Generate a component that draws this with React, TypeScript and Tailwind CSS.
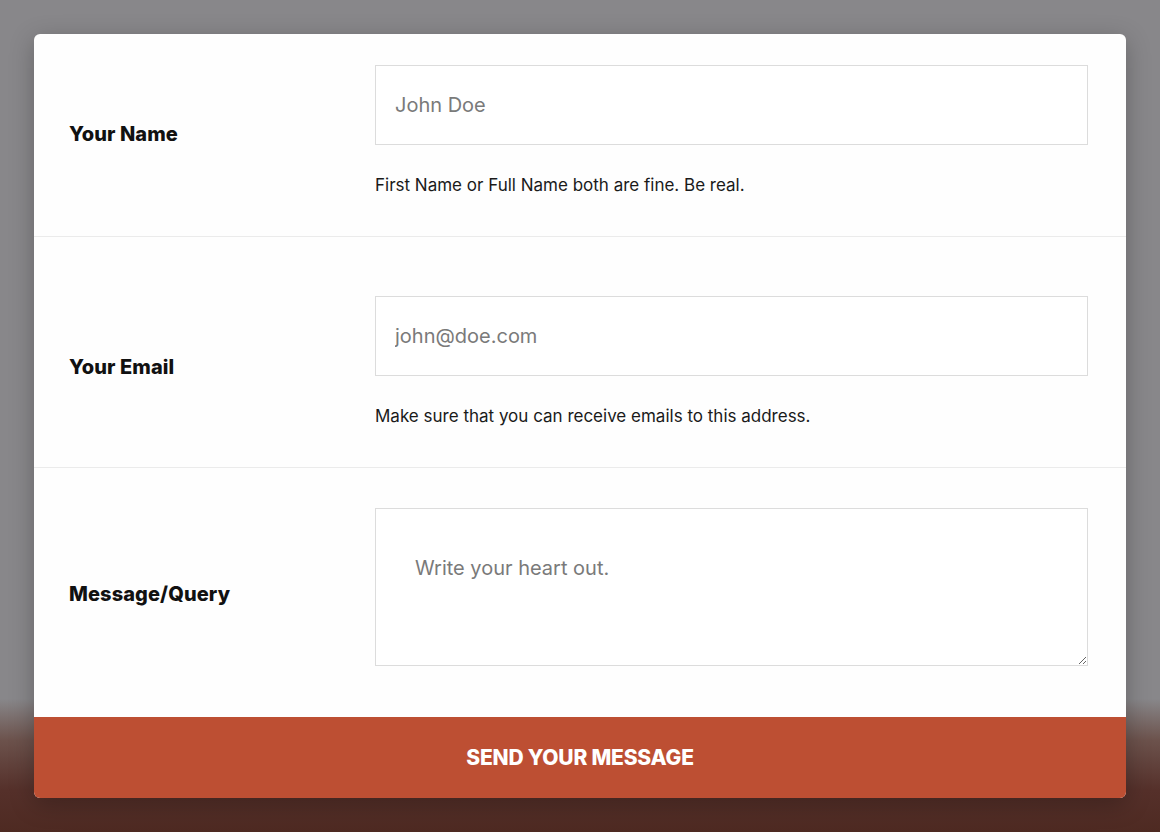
const labelClass =
  "w-[306px] shrink-0 mt-[10px] text-[20px] font-extrabold tracking-[0.005em] text-[#111111]";

const fieldClass =
  "block w-full border border-[#dcdcdc] bg-white text-[20px] text-[#333] outline-none placeholder:text-[#7a7a7a]";

const helpClass = "mt-[28px] text-[17px] leading-[24px] text-[#1a1a1a]";

export default function App() {
  return (
    <div
      className="h-[832px] w-[1160px] overflow-hidden bg-[linear-gradient(to_bottom,#88878a_0%,#88878a_84%,#6c524c_89%,#55302a_95%,#4e2a22_100%)] px-[34px] pt-[34px]"
      style={{ fontFamily: "Inter, 'Noto Sans', sans-serif" }}
    >
      <div className="w-[1092px] overflow-hidden rounded-md bg-[#fefefe] shadow-[0_6px_24px_rgba(0,0,0,0.25)]">
        {/* Name */}
        <div className="flex items-center border-b border-[#ebebeb] pl-[35px] pr-[38px] pt-[31px] pb-[39px]">
          <label className={`${labelClass} -translate-y-[2px]`}>Your Name</label>
          <div className="flex-1">
            <input
              type="text"
              placeholder="John Doe"
              className={`${fieldClass} h-[80px] px-[19px]`}
            />
            <p className={helpClass}>
              First Name or Full Name both are fine. Be real.
            </p>
          </div>
        </div>

        {/* Email */}
        <div className="flex items-center border-b border-[#ebebeb] pl-[35px] pr-[38px] pt-[59px] pb-[39px]">
          <label className={labelClass}>Your Email</label>
          <div className="flex-1">
            <input
              type="email"
              placeholder="john@doe.com"
              className={`${fieldClass} h-[80px] px-[19px]`}
            />
            <p className={helpClass}>
              Make sure that you can receive emails to this address.
            </p>
          </div>
        </div>

        {/* Message */}
        <div className="flex items-center pl-[35px] pr-[38px] pt-[40px] pb-[51px]">
          <label className={`${labelClass} translate-y-[2px]`}>Message/Query</label>
          <div className="flex-1">
            <textarea
              placeholder="Write your heart out."
              className={`${fieldClass} h-[158px] resize-y px-[39px] pt-[45px] leading-[28px]`}
            />
          </div>
        </div>

        <button
          type="button"
          className="flex h-[81px] w-full items-center justify-center bg-[#bd4f33] text-[21px] font-extrabold uppercase tracking-[-0.01em] text-white"
        >
          Send Your Message
        </button>
      </div>
    </div>
  );
}
